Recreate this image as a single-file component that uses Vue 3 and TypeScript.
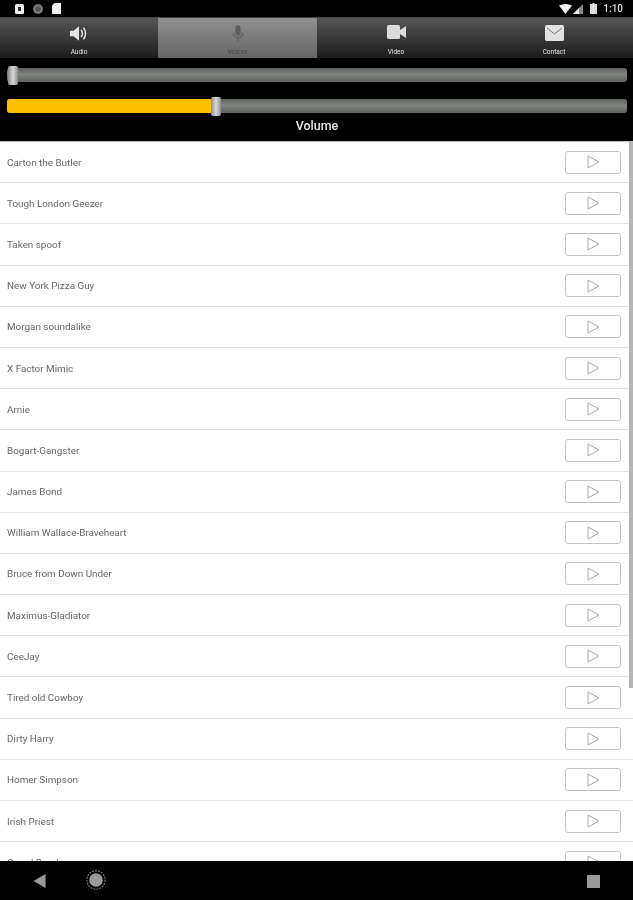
<script setup lang="ts">
const tabs: { label: string; icon: string; active?: boolean }[] = [
  { label: 'Audio', icon: 'audio' },
  { label: 'Voices', icon: 'mic', active: true },
  { label: 'Video', icon: 'video' },
  { label: 'Contact', icon: 'mail' },
]
const voices: string[] = [
  'Carton the Butler', 'Tough London Geezer', 'Taken spoof', 'New York Pizza Guy',
  'Morgan soundalike', 'X Factor Mimic', 'Arnie', 'Bogart-Gangster', 'James Bond',
  'William Wallace-Braveheart', 'Bruce from Down Under', 'Maximus-Gladiator', 'CeeJay',
  'Tired old Cowboy', 'Dirty Harry', 'Homer Simpson', 'Irish Priest', 'Grand Bond',
]
</script>

<template>
  <div class="screen">
    <div class="status">
      <div class="status-left">
        <svg width="9" height="10" viewBox="0 0 9 10"><rect x="0" y="0" width="9" height="10" rx="1.500" fill="#eee"/><rect x="3" y="3" width="3" height="4" fill="#333"/></svg>
        <svg width="10" height="10" viewBox="0 0 10 10"><circle cx="5" cy="5" r="5" fill="#777"/><circle cx="5" cy="5" r="2.500" fill="#555"/></svg>
        <svg width="9" height="11" viewBox="0 0 9 11"><path d="M2.500 0H9V11H0V2.500Z" fill="#eee"/></svg>
      </div>
      <div class="status-right">
        <svg width="13" height="10" viewBox="0 0 13 10"><path d="M0 1.500Q6.500 -1.500 13 1.500L6.500 10Z" fill="#f2f2f2"/></svg>
        <svg width="10" height="10" viewBox="0 0 10 10"><path d="M10 0V10H0Z" fill="#888"/><path d="M6 4V10H0Z" fill="#eee"/></svg>
        <svg class="batt" width="7" height="11" viewBox="0 0 7 11"><path d="M2.500 0H4.500V1H7V11H0V1H2.500Z" fill="#ddd"/></svg>
        <span class="time">1:10</span>
      </div>
    </div>

    <div class="tabs">
      <div v-for="t in tabs" :key="t.label" class="tab" :class="{ active: t.active }">
        <svg v-if="t.icon === 'audio'" width="18" height="17" viewBox="0 0 20 18">
          <path d="M0 6H4L10 1V17L4 12H0Z" fill="#e6e6e6"/>
          <path d="M12.500 5Q15 9 12.500 13" fill="none" stroke="#e6e6e6" stroke-width="1.600"/>
          <path d="M15 2.500Q19.500 9 15 15.500" fill="none" stroke="#e6e6e6" stroke-width="1.600"/>
        </svg>
        <svg v-else-if="t.icon === 'mic'" width="12" height="17" viewBox="0 0 14 19">
          <rect x="4" y="0" width="6" height="12" rx="3" fill="#5f5f5f"/>
          <path d="M1.500 8.500Q1.500 14 7 14Q12.500 14 12.500 8.500" fill="none" stroke="#5f5f5f" stroke-width="1.300"/>
          <rect x="6.200" y="14" width="1.600" height="5" fill="#5f5f5f"/>
        </svg>
        <svg v-else-if="t.icon === 'video'" width="19" height="14" viewBox="0 0 19 14">
          <rect x="0" y="0" width="13" height="14" rx="1.500" fill="#dcdcdc"/>
          <path d="M13 5L19 1V13L13 9Z" fill="#dcdcdc"/>
        </svg>
        <svg v-else width="19" height="16" viewBox="0 0 19 16">
          <rect x="0" y="0" width="19" height="16" rx="1.500" fill="#e2e2e2"/>
          <path d="M2 3L9.500 9L17 3" fill="none" stroke="#777" stroke-width="1"/>
        </svg>
        <span class="tab-label">{{ t.label }}</span>
      </div>
    </div>

    <div class="controls">
      <div class="slider">
        <div class="track"></div>
        <div class="thumb thumb-start"></div>
      </div>
      <div class="slider slider-volume">
        <div class="track"></div>
        <div class="fill"></div>
        <div class="thumb thumb-volume"></div>
      </div>
      <div class="volume-label">Volume</div>
    </div>

    <div class="list">
      <div v-for="v in voices" :key="v" class="row">
        <span class="name">{{ v }}</span>
        <button class="play" type="button">
          <svg width="13" height="14" viewBox="0 0 13 14">
            <path d="M1 1L12 7L1 13Z" fill="none" stroke="#aaa" stroke-width="1"/>
          </svg>
        </button>
      </div>
      <div class="scrollbar"></div>
    </div>

    <div class="nav">
      <svg class="nav-back" width="13" height="14" viewBox="0 0 13 15"><path d="M13 0V15L0 7.500Z" fill="#9a9a9a"/></svg>
      <svg class="nav-home" width="20" height="20" viewBox="0 0 20 20"><circle cx="10" cy="10" r="6.800" fill="#9a9a9a"/><circle cx="10" cy="10" r="9.200" fill="none" stroke="#777" stroke-width="1.200" stroke-dasharray="2 1"/></svg>
      <div class="nav-square"></div>
    </div>
  </div>
</template>

<style scoped>
.screen {
  width: 633px;
  height: 900px;
  display: flex;
  flex-direction: column;
  background: #000;
  font-family: Roboto, "Liberation Sans", sans-serif;
  overflow: hidden;
  filter: blur(0.4px);
}
.status {
  height: 17px;
  flex: none;
  display: flex;
  align-items: center;
  justify-content: space-between;
  padding: 0 10px 0 15px;
}
.status-left {
  display: flex;
  align-items: center;
  gap: 9px;
}
.status-right {
  display: flex;
  align-items: center;
  gap: 1px;
}
.batt { margin-left: 6px; }
.time {
  margin-left: 5px;
  color: #ddd;
  font-size: 10px;
  font-weight: 500;
}
.tabs {
  height: 41px;
  flex: none;
  display: grid;
  grid-template-columns: 158px 159px 158px 158px;
  background: linear-gradient(#555, #1c1c1c);
  border-top: 1px solid #444;
  box-sizing: border-box;
}
.tab {
  display: flex;
  flex-direction: column;
  align-items: center;
  padding-top: 7px;
  height: 40px;
  box-sizing: border-box;
  position: relative;
}
.tab.active { background: linear-gradient(#8f8f8f, #666); }
.tab-label {
  position: absolute;
  top: 30px;
  font-size: 6.500px;
  color: #e4e4e4;
}
.tab.active .tab-label { color: #444; }
.controls {
  height: 83px;
  flex: none;
  box-sizing: border-box;
  padding: 10px 6px 0 7px;
}
.slider {
  position: relative;
  height: 14px;
}
.slider-volume { margin-top: 17px; }
.track {
  height: 14px;
  border-radius: 3px;
  background: linear-gradient(#5e625e, #80847f 45%, #5e615e);
}
.fill {
  position: absolute;
  left: 0;
  top: 0;
  height: 14px;
  width: 206px;
  border-radius: 3px 0 0 3px;
  background: #fdbf00;
}
.thumb {
  position: absolute;
  top: -2px;
  width: 10px;
  height: 19px;
  border-radius: 2px;
  background: linear-gradient(90deg, #8c8c8c, #d8d8d8 50%, #8c8c8c);
}
.thumb-start { left: 1px; }
.thumb-volume { left: 204px; }
.volume-label {
  margin-top: 5px;
  text-align: center;
  color: #e8e8e8;
  font-size: 12.500px;
  font-weight: 500;
  line-height: 16px;
}
.list {
  position: relative;
  flex: 1;
  min-height: 0;
  overflow: hidden;
  background: #fff;
  border-top: 1px solid #bbb;
}
.row {
  height: 41.200px;
  box-sizing: border-box;
  display: flex;
  align-items: center;
  justify-content: space-between;
  padding: 0 12px 0 7px;
  border-bottom: 1.500px solid #e2e2e2;
}
.name {
  font-size: 9.900px;
  color: #666;
}
.play {
  width: 56px;
  height: 23px;
  padding: 0 0 0 1px;
  display: flex;
  align-items: center;
  justify-content: center;
  background: #fff;
  border: 1px solid #c4c4c4;
  border-radius: 3px;
}
.scrollbar {
  position: absolute;
  right: 0;
  top: 0;
  width: 4px;
  height: 546px;
  background: #b5b5b5;
}
.nav {
  height: 39px;
  flex: none;
  position: relative;
  background: #000;
}
.nav-back { position: absolute; left: 33px; top: 13px; }
.nav-home { position: absolute; left: 86px; top: 9px; }
.nav-square {
  position: absolute;
  left: 587px;
  top: 14px;
  width: 13px;
  height: 13px;
  background: #9a9a9a;
}
</style>
